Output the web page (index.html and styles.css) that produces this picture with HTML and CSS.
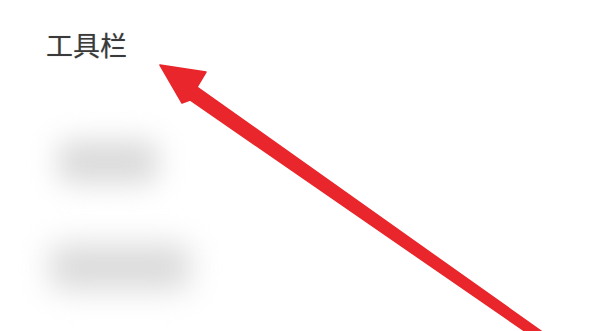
FILE: index.html
```html
<!DOCTYPE html>
<html lang="zh">
<head>
<meta charset="utf-8">
<link rel="stylesheet" href="styles.css">
</head>
<body>
<div class="page">
  <div class="title">工具栏</div>
  <div class="item item-one"></div>
  <div class="item item-two"></div>
  <svg class="arrow" width="600" height="331" viewBox="0 0 600 331">
    <polygon points="160,65 206,72 197,87 548,336 542,343 190,100 182,103" fill="#e9262b" stroke="#e9262b" stroke-width="1.5" stroke-linejoin="round"/>
  </svg>
</div>
</body>
</html>
```

FILE: styles.css
```css
html, body {
  margin: 0;
  padding: 0;
  background: #ffffff;
}
.page {
  position: relative;
  width: 600px;
  height: 331px;
  overflow: hidden;
  display: flex;
  flex-direction: column;
  padding: 30px 0 0 46px;
  box-sizing: border-box;
}
.title {
  font-family: "Noto Sans CJK SC", "Noto Sans", sans-serif;
  font-size: 27px;
  line-height: 30px;
  color: #3a3a3a;
  text-shadow: 0 0 1px rgba(0, 0, 0, 0.35);
}
.item {
  background: #dbdbdb;
  border-radius: 10px;
}
.item-one {
  width: 100px;
  height: 44px;
  margin: 80px 0 0 12px;
  filter: blur(14px);
}
.item-two {
  width: 140px;
  height: 46px;
  margin: 60px 0 0 4px;
  filter: blur(15px);
}
.arrow {
  position: absolute;
  left: 0;
  top: 0;
}
```
